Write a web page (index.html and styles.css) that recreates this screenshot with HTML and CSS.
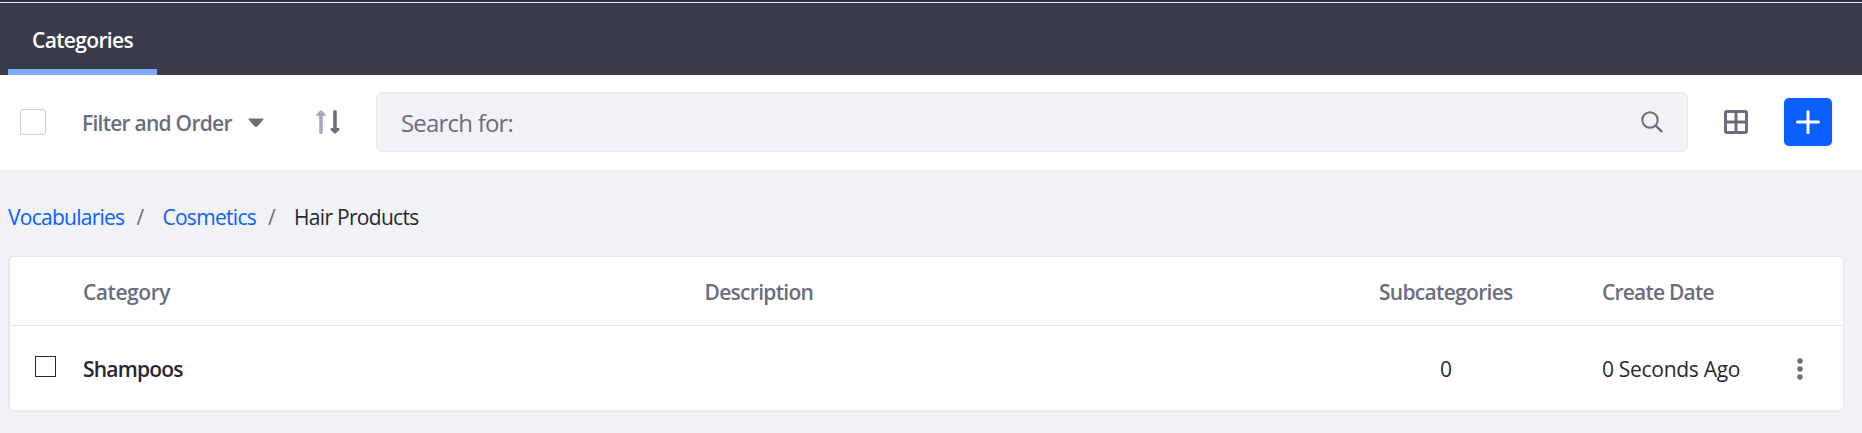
FILE: index.html
```html
<!DOCTYPE html>
<html lang="en">
<head>
<meta charset="utf-8">
<title>Categories</title>
<link rel="stylesheet" href="styles.css">
</head>
<body>
<nav class="navbar">
  <a class="tab"><span class="t-categories">Categories</span></a>
</nav>
<div class="toolbar">
  <span class="select-all"></span>
  <div class="filter"><span class="t-filter">Filter and Order</span>
    <svg class="caret" width="16" height="10" viewBox="0 0 16 10"><path d="M1.200 0.500h13.600q1.400 0 .5 1.200L9.500 8.300q-1.500 1.400-3 0L.7 1.700Q-.2.500 1.200.500z" fill="#6b6c7e"/></svg>
  </div>
  <svg class="sort" width="24" height="24" viewBox="0 0 24 24" fill="none" stroke-width="3.600" stroke-linecap="round">
    <path d="M5 22.200V3" stroke="#a7a9bc"/><path d="M5 0L.4 4.200Q0 6 1.600 6H8.400Q10 6 9.600 4.200z" fill="#a7a9bc"/>
    <path d="M19 1.800v19" stroke="#6b6c7e"/><path d="M19 24l-4.600-4.200q-.4-1.800 1.200-1.800h6.800q1.600 0 1.200 1.800z" fill="#6b6c7e"/>
  </svg>
  <div class="search">
    <span class="t-search">Search for:</span>
    <svg width="22" height="22" viewBox="0 0 22 22" fill="none" stroke="#6b6c7e" stroke-width="2" stroke-linecap="round"><circle cx="9" cy="9" r="7.700"/><path d="M14.700 14.600l5.800 5.800" stroke-width="2.300"/></svg>
  </div>
  <svg class="view" width="24" height="24" viewBox="0 0 24 24"><rect x="1.500" y="1.500" width="21" height="21" rx="1.500" fill="none" stroke="#6b6c7e" stroke-width="3"/><path d="M12 2v20M2 12h20" stroke="#6b6c7e" stroke-width="3"/></svg>
  <a class="add"><svg width="24" height="24" viewBox="0 0 24 24"><path d="M12 1.500v21M1.500 12h21" stroke="#fff" stroke-width="3" stroke-linecap="round"/></svg></a>
</div>
<div class="breadcrumb">
  <a class="t-vocab">Vocabularies</a><i class="slash">/</i><a class="t-cosm">Cosmetics</a><i class="slash">/</i><span class="t-hair">Hair Products</span>
</div>
<div class="table">
  <div class="row head">
    <span></span><span class="t-category">Category</span><span class="t-desc">Description</span><span class="t-sub">Subcategories</span><span class="t-date">Create Date</span><span></span>
  </div>
  <div class="row">
    <span class="check"></span><b class="t-shampoo">Shampoos</b><span></span><span class="count">0</span><span class="t-ago">0 Seconds Ago</span>
    <svg class="kebab" width="6" height="22" viewBox="0 0 6 22" fill="#6b6c7e"><circle cx="3" cy="3" r="2.700"/><circle cx="3" cy="11" r="2.700"/><circle cx="3" cy="19" r="2.700"/></svg>
  </div>
</div>
</body>
</html>
```
FILE: styles.css
```css
* { box-sizing: border-box; }
body { margin: 0; background: #f1f2f5; color: #272833; font: 21px/30px "Open Sans", "Noto Sans", sans-serif; letter-spacing: -0.7px; white-space: nowrap; }
svg { display: block; flex: none; }
.navbar { height: 75px; padding-left: 8px; display: flex; background: linear-gradient(#30313f 2px, #f1f2f5 2px, #f1f2f5 3px, #393a4a 3px); }
.tab { width: 149px; padding: 25px 0 0 24px; border-bottom: 6px solid #80acff; color: #fff; font-weight: 600; }
.t-categories { letter-spacing: -0.65px; }
.toolbar { height: 95px; background: #fff; display: flex; align-items: center; padding: 0 30px 1px 20px; }
.select-all { width: 26px; height: 26px; border: 1px solid #cdced9; border-radius: 3px; }
.filter { width: 182px; margin-left: 36px; display: flex; align-items: center; justify-content: space-between; color: #6b6c7e; font-weight: 600; }
.t-filter { letter-spacing: -0.75px; padding-top: 2px; }
.caret { margin-top: 2px; }
.sort { margin-left: 52px; }
.search { margin-left: 36px; width: 1312px; height: 60px; border: 1px solid #e7e7ed; border-radius: 6px; background: #f1f2f5; color: #6b6c7e; font-size: 24px; display: flex; align-items: center; justify-content: space-between; padding: 0 24px; }
.t-search { letter-spacing: -0.8px; padding-top: 2px; }
.view { margin-left: 36px; }
.add { margin-left: 36px; width: 48px; height: 48px; border-radius: 5px; background: #0b5fff; display: flex; align-items: center; justify-content: center; }
.breadcrumb { height: 86px; padding: 32px 0 0 8px; display: flex; }
.breadcrumb a { color: #0b5fff; }
.slash { width: 38px; padding-left: 12px; font-style: normal; color: #6b6c7e; }
.t-vocab { letter-spacing: -0.74px; }
.table { margin-left: 8px; width: 1836px; height: 155px; border: 1px solid #e7e7ed; border-left-width: 2px; border-radius: 5px; background: #fff; }
.row { display: grid; grid-template-columns: 73px 621.500px 674.500px 223px 195px 1fr; height: 84px; align-items: center; padding-top: 2px; }
.head { height: 69px; border-bottom: 1px solid #e7e7ed; color: #6b6c7e; font-weight: 600; }
.check { width: 21px; height: 21px; margin: -5px 0 0 25px; border: 1px solid #272833; }
.count { padding-left: 61px; }
.t-category { letter-spacing: -0.45px; }
.t-date { letter-spacing: -0.8px; }
.t-shampoo { letter-spacing: -0.8px; }
.t-ago { letter-spacing: -0.3px; }
b { font-weight: 600; }
```
